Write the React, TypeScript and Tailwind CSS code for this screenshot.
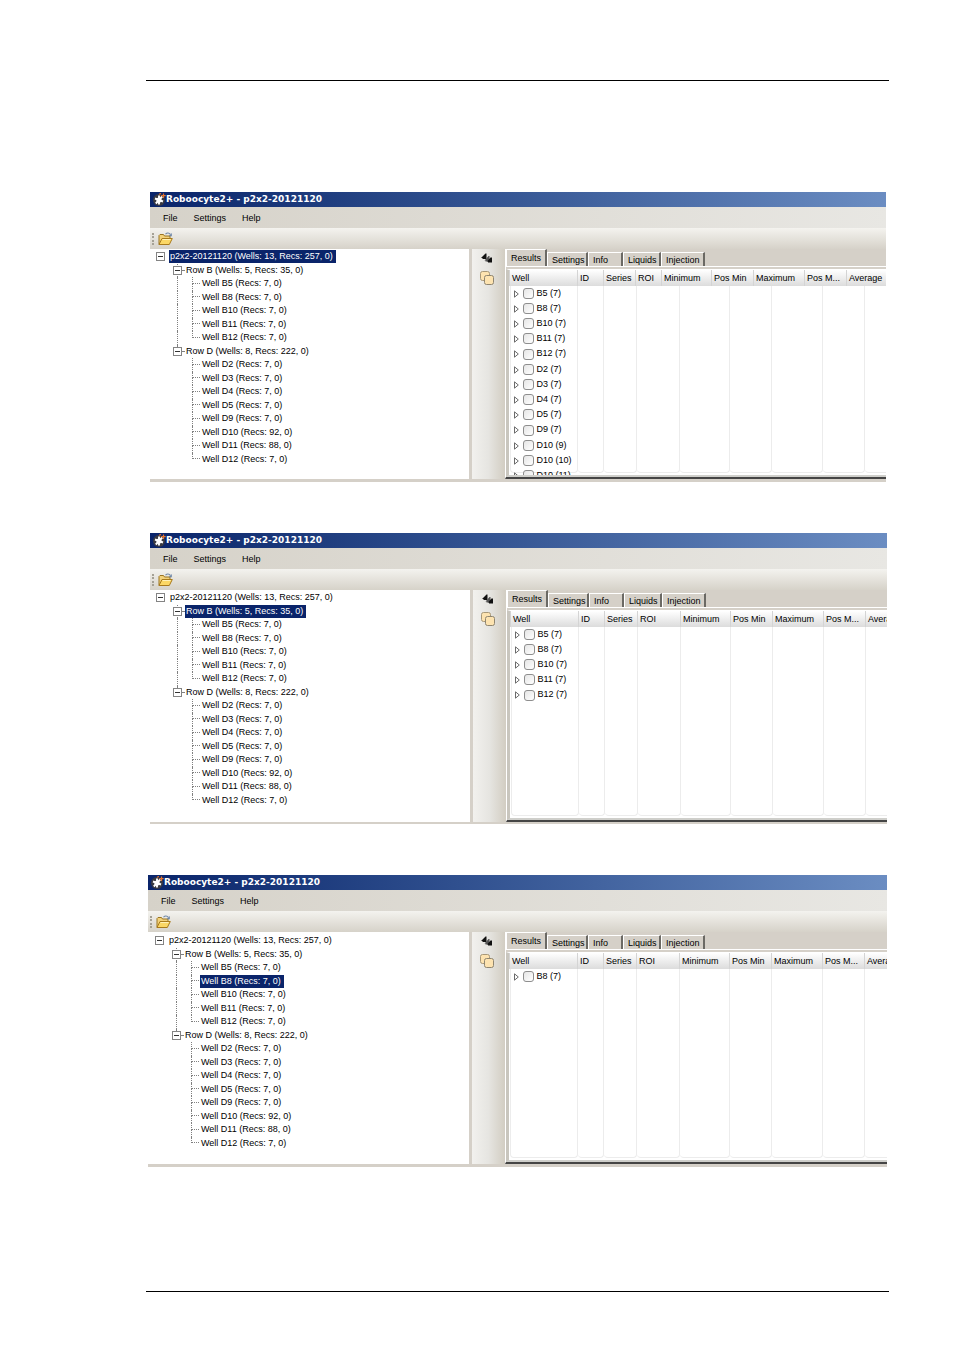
import { useState } from 'react';
import clsx from 'clsx';

type Row = { label: string; depth: number; last?: boolean; inner?: boolean };

const tree: Row[] = [
  { label: 'p2x2-20121120 (Wells: 13, Recs: 257, 0)', depth: 0 },
  { label: 'Row B (Wells: 5, Recs: 35, 0)', depth: 1 },
  { label: 'Well B5 (Recs: 7, 0)', depth: 2, inner: true },
  { label: 'Well B8 (Recs: 7, 0)', depth: 2, inner: true },
  { label: 'Well B10 (Recs: 7, 0)', depth: 2, inner: true },
  { label: 'Well B11 (Recs: 7, 0)', depth: 2, inner: true },
  { label: 'Well B12 (Recs: 7, 0)', depth: 2, inner: true, last: true },
  { label: 'Row D (Wells: 8, Recs: 222, 0)', depth: 1, last: true },
  { label: 'Well D2 (Recs: 7, 0)', depth: 2 },
  { label: 'Well D3 (Recs: 7, 0)', depth: 2 },
  { label: 'Well D4 (Recs: 7, 0)', depth: 2 },
  { label: 'Well D5 (Recs: 7, 0)', depth: 2 },
  { label: 'Well D9 (Recs: 7, 0)', depth: 2 },
  { label: 'Well D10 (Recs: 92, 0)', depth: 2 },
  { label: 'Well D11 (Recs: 88, 0)', depth: 2 },
  { label: 'Well D12 (Recs: 7, 0)', depth: 2, last: true },
];

const tabs = [
  { name: 'Results', width: 'w-[41px]' },
  { name: 'Settings', width: 'w-[41px]' },
  { name: 'Info', width: 'w-[35px]' },
  { name: 'Liquids', width: 'w-[38px]' },
  { name: 'Injection', width: 'w-[44px]' },
];

const columns = ['Well', 'ID', 'Series', 'ROI', 'Minimum', 'Pos Min', 'Maximum', 'Pos M...', 'Average'];

// column widths, the last column takes what is left
const narrowHead = [68, 26, 32, 26, 50, 42, 51, 42];
const wideHead = [68, 26, 33, 43, 50, 42, 51, 42];

const windows = [
  {
    selected: 0,
    head: narrowHead,
    frame: 'mr-[3px] ml-1 border-b-[3px]',
    pane: 'w-[319px] pt-px',
    rows: ['B5 (7)', 'B8 (7)', 'B10 (7)', 'B11 (7)', 'B12 (7)', 'D2 (7)', 'D3 (7)', 'D4 (7)', 'D5 (7)', 'D9 (7)', 'D10 (9)', 'D10 (10)', 'D10 (11)'],
    body: 'h-[230px]',
  },
  {
    selected: 1,
    head: wideHead,
    frame: 'mr-0.5 ml-1 border-b-2',
    pane: 'w-80 pt-px',
    rows: ['B5 (7)', 'B8 (7)', 'B10 (7)', 'B11 (7)', 'B12 (7)'],
    body: 'h-[232px]',
  },
  {
    selected: 3,
    head: wideHead,
    frame: 'mr-0.5 ml-0.5 border-b-[3px]',
    pane: 'w-[321px] pt-0.5 pl-px',
    rows: ['B8 (7)'],
    body: 'h-[232px]',
  },
];

function AppIcon() {
  return (
    <svg viewBox="0 0 13 13" className="size-[13px]">
      <circle cx="6" cy="7" r="6" fill="#3a3a42" />
      <path d="M6 2.500v9M2 5.500l8 3M2.800 10.500l6.400-7" stroke="#fff" strokeWidth="1.900" />
      <circle cx="6" cy="7" r="2.600" fill="#fff" />
      <path d="M10.500 .5v4.500M8.300 2.700h4.400" stroke="#e8742c" strokeWidth="1.200" />
      <path d="M6 1.200l2-.7" stroke="#e8742c" strokeWidth="1.200" />
    </svg>
  );
}

function FolderIcon() {
  return (
    <svg viewBox="0 0 15 14" className="h-3.5 w-[15px]">
      <path d="M1 12.5V3.5l1-1h3.5l1 1.5h5.5v3" fill="#f3d27a" stroke="#9a7420" />
      <path d="M1 12.5l3-6h10.3l-3 6z" fill="#fbd765" stroke="#a87a1c" />
      <path d="M4.6 7.5h8" stroke="#fff1b8" />
      <path d="M7.5 2.2C9 .6 11 .6 12.4 2.4" fill="none" stroke="#6e87a8" strokeWidth="1.1" />
      <path d="M13.8 1v3.2h-3.2z" fill="#6e87a8" />
    </svg>
  );
}

function ArrowsIcon() {
  return (
    <svg viewBox="0 0 12 10" className="h-2.5 w-3">
      <path d="M0 5L4.500.5h1V6H1.500V5z" fill="#111" />
      <path d="M3.500 7.500L7.500 3h1v5.500h-4v-1z" fill="#555" />
      <path d="M6 8.500L9.500 4.500h1.500v5H7v-1z" fill="#111" />
    </svg>
  );
}

function CopyIcon() {
  return (
    <svg viewBox="0 0 14 14" className="size-3.5">
      <rect x=".5" y=".5" width="9" height="9" rx="2" fill="#fde3b0" stroke="#a89878" />
      <rect x="4.500" y="4.500" width="9" height="9" rx="2" fill="#fde3b0" stroke="#8f8570" />
    </svg>
  );
}

function Expander() {
  return (
    <button aria-label="Collapse" className="relative flex size-[9px] items-center justify-center border border-[#848484] bg-white">
      <span className="h-px w-[5px] bg-[#333]" />
    </button>
  );
}

function TreeRow({ row, selected, onSelect }: { row: Row; selected: boolean; onSelect: () => void }) {
  return (
    <li role="treeitem" aria-selected={selected} className="flex min-h-0 items-center">
      {row.depth === 0 && (
        <span className="flex w-[19px] shrink-0 pl-1.5">
          <Expander />
        </span>
      )}
      {row.depth === 1 && (
        <span className="relative flex w-[35px] shrink-0 items-center self-stretch pl-[23px]">
          <span className={clsx('absolute top-0 left-[27px] border-l border-dotted border-[#808080]', row.last ? 'h-1/2' : 'h-full')} />
          <Expander />
          <span className="w-0.5 border-t border-dotted border-[#808080]" />
        </span>
      )}
      {row.depth === 2 && (
        <span className="flex w-[51px] shrink-0 self-stretch pl-[27px]">
          <span className={clsx('w-[15px] border-l border-dotted', row.inner ? 'border-[#808080]' : 'border-transparent')} />
          <span className="flex w-2 flex-col">
            <span className="h-1/2 border-b border-l border-dotted border-[#808080]" />
            {!row.last && <span className="h-1/2 border-l border-dotted border-[#808080]" />}
          </span>
        </span>
      )}
      <button
        onClick={onSelect}
        className={clsx('h-[13px] px-px leading-[13px] whitespace-nowrap', selected ? 'bg-[#0a246a] pr-[3px] text-white' : 'text-black')}
      >
        {row.label}
      </button>
    </li>
  );
}

function Tabs() {
  const [active, setActive] = useState('Results');
  return (
    <div role="tablist" className="flex h-[17px] items-end border-b border-white">
      {tabs.map((tab) => (
        <button
          key={tab.name}
          role="tab"
          aria-selected={active === tab.name}
          onClick={() => setActive(tab.name)}
          className={clsx(
            'shrink-0 border-t border-r-2 border-l border-t-white border-r-[#6b6964] border-l-white pl-1 text-left leading-3',
            tab.width,
            active === tab.name ? 'h-[17px] pb-px' : 'h-3.5',
          )}
        >
          {tab.name}
        </button>
      ))}
    </div>
  );
}

function Results({ head, rows }: { head: number[]; rows: string[] }) {
  return (
    <div className="relative min-h-0 flex-1 overflow-hidden bg-white">
      {/* Column guides under the header */}
      <div className="absolute inset-x-0 top-4 bottom-0.5 flex pl-px">
        {wideHead.map((width, i) => (
          <span key={i} style={{ width }} className="shrink-0 rounded-b border-r border-b border-[#ececec] first:border-l" />
        ))}
        <span className="flex-1 rounded-bl border-b border-[#ececec]" />
      </div>
      <table className="relative w-full table-fixed border-collapse">
        <colgroup>
          {head.map((width, i) => (
            <col key={i} style={{ width }} />
          ))}
          <col />
        </colgroup>
        <thead>
          <tr className="h-4 bg-linear-to-b from-white to-[#dcdcdc]">
            {columns.map((name) => (
              <th key={name} className="overflow-hidden border-l border-[#d4d4d4] p-0 pl-0.5 text-left leading-[14px] font-normal whitespace-nowrap">
                {name}
              </th>
            ))}
          </tr>
        </thead>
        <tbody>
          {rows.map((name) => (
            <tr key={name} className="h-[15px] nth-[5n]:h-4">
              <td colSpan={9} className="p-0 pl-1">
                <label className="flex h-[15px] items-center">
                  <svg viewBox="0 0 5 8" className="mr-1 h-2 w-[5px]">
                    <path d="M.5.8v6.400L4.300 4z" fill="#fff" stroke="#6b6b6b" />
                  </svg>
                  <input
                    type="checkbox"
                    className="mr-[3px] size-[11px] appearance-none rounded-[3px] border border-[#8e8e8e] bg-linear-to-br from-[#e6e6e6] to-white checked:bg-[#0a246a]"
                  />
                  {name}
                </label>
              </td>
            </tr>
          ))}
        </tbody>
      </table>
    </div>
  );
}

function RoboWindow({ data }: { data: (typeof windows)[number] }) {
  const [selected, setSelected] = useState(data.selected);
  return (
    <section className={clsx('overflow-hidden border-[#d5d0c8]', data.frame)}>
      <header className="flex h-[15px] items-center bg-linear-to-r from-[#0a246a] to-[#6b8dc2] pl-[3px]">
        <AppIcon />
        <h2 className="font-['DejaVu_Sans',sans-serif] text-[9px] font-bold text-white">
          Roboocyte2+ - p2x2-20121120
        </h2>
      </header>
      <nav className="flex h-[21px] items-center gap-4 bg-linear-to-r from-[#d6d2c9] to-[#e8e7e3] pt-0.5 pl-[13px]">
        <button>File</button>
        <button>Settings</button>
        <button>Help</button>
      </nav>
      <div className="flex h-[21px] items-center bg-linear-to-b from-[#f4f3ef] to-[#d6d2c9] pl-0.5">
        <span className="mr-1 h-3 border-l-2 border-dotted border-[#a5a195]" />
        <button aria-label="Open">
          <FolderIcon />
        </button>
      </div>
      <div className={clsx('flex', data.body)}>
        <div className={clsx('shrink-0 bg-white', data.pane)}>
          <ul role="tree" className="grid h-54 auto-rows-fr">
            {tree.map((row, i) => (
              <TreeRow key={row.label} row={row} selected={i === selected} onSelect={() => setSelected(i)} />
            ))}
          </ul>
        </div>
        <div className="w-[3px] shrink-0 bg-[#d5d0c8]" />
        <div className="flex w-[33px] shrink-0 flex-col items-center gap-2 bg-linear-to-r from-[#f2f1ee] via-[#e6e5e1] to-[#d2cdc2] pt-1 pr-1">
          <button aria-label="Collapse all">
            <ArrowsIcon />
          </button>
          <button aria-label="Copy">
            <CopyIcon />
          </button>
        </div>
        <div className="flex min-w-0 flex-1 flex-col border-b-2 border-l border-b-[#454545] border-l-white bg-[#d5d0c8] pt-px">
          <Tabs />
          <div className="mt-0.5 flex min-h-0 flex-1 flex-col border-t border-b-2 border-l-[3px] border-t-white border-b-[#cfcfcb] border-l-[#c9c6be]">
            <Results head={data.head} rows={data.rows} />
          </div>
        </div>
      </div>
    </section>
  );
}

export default function App() {
  return (
    <main className="min-h-screen bg-white pt-20 pr-[65px] pb-[58px] pl-[146px] font-['Liberation_Sans',Arial,sans-serif] text-[9px] text-black">
      <hr className="border-black" />
      <div className="mt-[111px] mb-[124px] flex flex-col gap-[51px]">
        {windows.map((data) => (
          <RoboWindow key={data.selected} data={data} />
        ))}
      </div>
      <hr className="border-black" />
    </main>
  );
}
